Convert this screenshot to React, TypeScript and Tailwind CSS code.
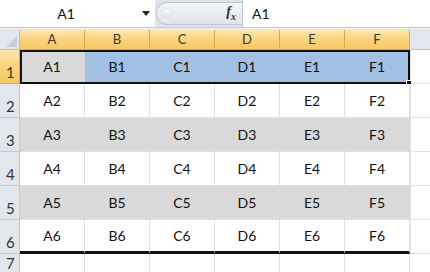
import React from "react";

const cols = ["A", "B", "C", "D", "E", "F"];
const rows = [1, 2, 3, 4, 5, 6];
const grayRows = [3, 5];

const Corner = () => (
  <div className="w-[20px] h-full bg-[#e3e7ed] border-r border-b border-[#b9c1cc] relative">
    <svg className="absolute right-[2px] bottom-[2px]" width="11" height="11" viewBox="0 0 11 11">
      <polygon points="11,0 11,11 0,11" fill="#c9ced6" />
    </svg>
  </div>
);

const App = () => {
  return (
    <div className="w-[430px] h-[272px] overflow-hidden bg-white font-['Lato','Open_Sans',sans-serif] text-[14px] text-[#111]">
      {/* Formula bar */}
      <div className="h-[28px] flex bg-[#dde3eb] border-b border-[#c5ccd6]">
        <div className="w-[155px] bg-white flex items-center">
          <span className="w-[132px] text-center">A1</span>
          <svg className="ml-[10px]" width="8" height="5" viewBox="0 0 8 5">
            <polygon points="0,0 8,0 4,5" fill="#222" />
          </svg>
        </div>
        <div className="w-[86px] my-[2px] ml-[1px] rounded-l-full bg-gradient-to-b from-[#f4f6f9] to-[#e1e5eb] border border-r-0 border-[#c2c9d3] flex items-center pl-[4px]">
          <div className="w-[11px] h-[11px] rounded-full bg-gradient-to-b from-[#fbfbfc] to-[#dde1e6] border border-[#e0e3e8]" />
          <span className="ml-auto mr-[6px] font-['Liberation_Serif',serif] italic font-bold text-[14px] text-[#333] leading-none">
            f<span className="text-[10px] align-sub">x</span>
          </span>
        </div>
        <div className="flex-1 bg-white border-l border-[#c2c9d3] flex items-center pl-[9px]">A1</div>
      </div>

      <div className="h-[2px] bg-[#e8ebf0]" />

      {/* Column headers */}
      <div className="h-[20px] flex">
        <Corner />
        {cols.map((c) => (
          <div
            key={c}
            className="w-[65px] h-full flex items-center justify-center bg-gradient-to-b from-[#fde8b0] via-[#fad27a] to-[#f6c964] border-r border-b border-[#d9a94f] text-[#3a3a2c] text-[13px]"
          >
            {c}
          </div>
        ))}
        <div className="flex-1 h-full bg-[#e3e7ed] border-b border-[#b9c1cc]" />
      </div>

      {/* Rows */}
      {rows.map((r) => {
        const isFirst = r === 1;
        const isGray = grayRows.includes(r);
        const isLast = r === 6;
        return (
          <div key={r} className="h-[34px] flex relative">
            <div
              className={`w-[20px] h-full flex items-end pl-[6px] text-[15px] border-r border-b ${
                isFirst
                  ? "bg-gradient-to-b from-[#fde8b0] via-[#fad27a] to-[#f6c964] border-[#d9a94f] text-[#3a3a2c]"
                  : "bg-[#e3e7ed] border-[#c3cad4] text-[#333]"
              }`}
            >
              {r}
            </div>
            {cols.map((c, i) => {
              let bg = "bg-white";
              if (isFirst) bg = i === 0 ? "bg-[#d9d9d9]" : "bg-[#a2c0e3]";
              else if (isGray) bg = "bg-[#d9d9d9]";
              return (
                <div
                  key={c}
                  className={`w-[65px] h-full flex items-center justify-center ${bg} border-r ${
                    isFirst || isGray ? "border-transparent" : "border-[#e0e0e0]"
                  } ${isLast ? "border-b-[3px] border-b-[#111]" : "border-b border-b-[#e0e0e0]"}`}
                >
                  {c}
                  {r}
                </div>
              );
            })}
            <div className="flex-1 h-full border-b border-[#e0e0e0] border-l border-l-[#e0e0e0]" />
            {isFirst && (
              <>
                <div className="absolute left-[20px] top-0 w-[390px] h-[34px] border-[2px] border-[#111] pointer-events-none" />
                <div className="absolute left-[406px] top-[30px] w-[6px] h-[6px] bg-[#111] border border-white" />
              </>
            )}
          </div>
        );
      })}

      {/* Row 7 (partial) */}
      <div className="h-[20px] flex">
        <div className="w-[20px] h-full bg-[#e3e7ed] border-r border-[#c3cad4] flex items-end pl-[6px] text-[15px] text-[#333]">7</div>
        {cols.map((c) => (
          <div key={c} className="w-[65px] h-full border-r border-[#e0e0e0]" />
        ))}
      </div>
    </div>
  );
};

export default App;
